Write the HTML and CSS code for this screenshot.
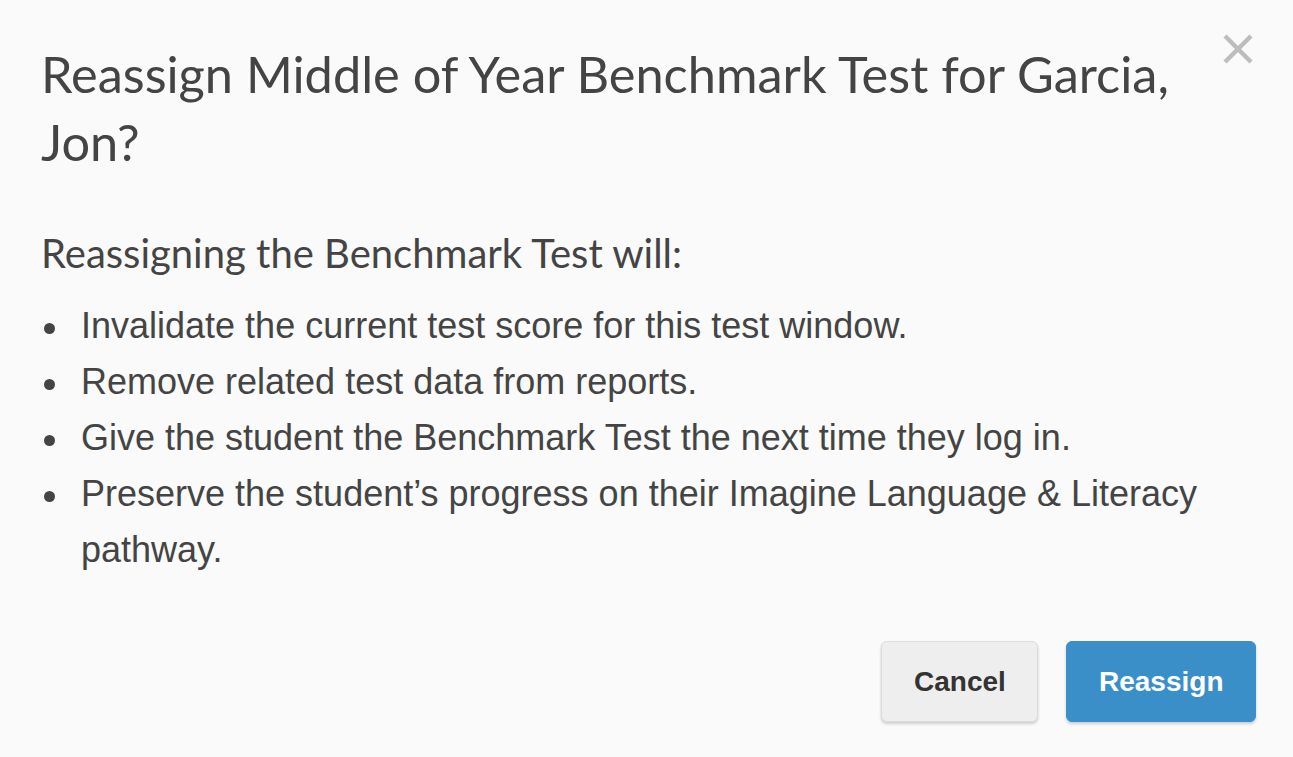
FILE: index.html
```html
<!DOCTYPE html>
<html>
<head>
<meta charset="utf-8">
<link rel="stylesheet" href="styles.css">
</head>
<body>
<div class="modal">
  <button class="close" aria-label="Close">
    <svg viewBox="0 0 32 32" width="32" height="32"><path d="M3 3 L29 29 M29 3 L3 29" stroke="#bdbdbd" stroke-width="4.5" fill="none"/></svg>
  </button>
  <h1 class="title">Reassign Middle of Year Benchmark Test for Garcia, Jon?</h1>
  <h2 class="subtitle">Reassigning the Benchmark Test will:</h2>
  <ul class="list">
    <li>Invalidate the current test score for this test window.</li>
    <li>Remove related test data from reports.</li>
    <li>Give the student the Benchmark Test the next time they log in.</li>
    <li>Preserve the student’s progress on their Imagine Language &amp; Literacy pathway.</li>
  </ul>
  <div class="actions">
    <button class="btn btn-cancel">Cancel</button>
    <button class="btn btn-primary">Reassign</button>
  </div>
</div>
</body>
</html>
```

FILE: styles.css
```css
html, body {
  margin: 0;
  padding: 0;
  background: #fafafa;
}
body {
  width: 1293px;
  height: 757px;
  overflow: hidden;
}
.modal {
  position: relative;
  padding: 40px 37px 0 41px;
  color: #444;
}
.close {
  position: absolute;
  top: 32px;
  right: 38px;
  border: 0;
  background: none;
  padding: 0;
  width: 34px;
  height: 34px;
  display: flex;
  align-items: center;
  justify-content: center;
}
.title {
  font-family: Lato, sans-serif;
  font-weight: 400;
  font-size: 50.5px;
  line-height: 68px;
  margin: 0;
  padding-right: 40px;
  color: #444;
}
.subtitle {
  font-family: Lato, sans-serif;
  font-weight: 400;
  font-size: 40px;
  line-height: 50px;
  margin: 52px 0 0 0;
  color: #444;
}
.list {
  font-family: "Liberation Sans", Arial, sans-serif;
  font-size: 36px;
  line-height: 56px;
  margin: 20px 0 0 0;
  padding: 0 50px 0 0;
  list-style: none;
  color: #444;
}
.list li {
  display: grid;
  grid-template-columns: 40px 1fr;
  align-items: start;
}
.list li::before {
  content: "";
  width: 11px;
  height: 11px;
  border-radius: 50%;
  background: #444;
  margin: 25px 0 0 3px;
}
.actions {
  display: flex;
  justify-content: flex-end;
  gap: 28px;
  margin-top: 63px;
}
.btn {
  font-family: "Liberation Sans", Arial, sans-serif;
  font-weight: 700;
  font-size: 28px;
  height: 81px;
  border-radius: 6px;
  padding: 0 32px;
  cursor: pointer;
}
.btn-cancel {
  background: #eeeeee;
  color: #333;
  border: 1px solid #dcdcdc;
  box-shadow: 0 2px 3px rgba(0,0,0,0.18);
  width: 157px;
}
.btn-primary {
  background: #3a8fc9;
  color: #fff;
  border: 1px solid #3a8fc9;
  box-shadow: 0 2px 3px rgba(0,0,0,0.18);
  width: 190px;
}
```
